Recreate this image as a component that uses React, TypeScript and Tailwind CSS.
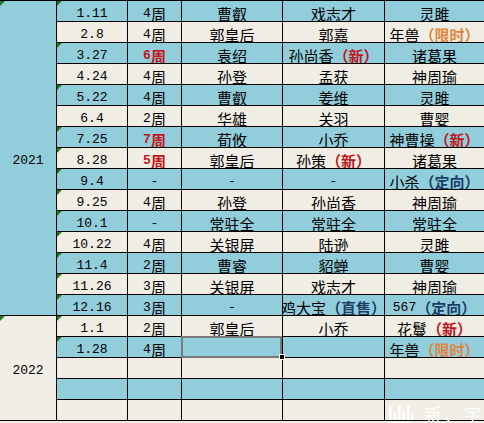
import React from "react";

type Seg = { t: string; c?: "red" | "orange" | "navy" };
type Row = {
  date: string;
  weeks: Seg[];
  a: Seg[];
  b: Seg[];
  c: Seg[];
  tri?: boolean;
};

const s = (t: string, c?: Seg["c"]): Seg[] => (t ? [{ t, c }] : []);

const rows2021: Row[] = [
  { date: "1.11", weeks: s("4周"), a: s("曹叡"), b: s("戏志才"), c: s("灵雎"), tri: true },
  { date: "2.8", weeks: s("4周"), a: s("郭皇后"), b: s("郭嘉"), c: [{ t: "年兽" }, { t: "（限时）", c: "orange" }] },
  { date: "3.27", weeks: s("6周", "red"), a: s("袁绍"), b: [{ t: "孙尚香" }, { t: "（新）", c: "red" }], c: s("诸葛果"), tri: true },
  { date: "4.24", weeks: s("4周"), a: s("孙登"), b: s("孟获"), c: s("神周瑜") },
  { date: "5.22", weeks: s("4周"), a: s("曹叡"), b: s("姜维"), c: s("灵雎"), tri: true },
  { date: "6.4", weeks: s("2周"), a: s("华雄"), b: s("关羽"), c: s("曹婴") },
  { date: "7.25", weeks: s("7周", "red"), a: s("荀攸"), b: s("小乔"), c: [{ t: "神曹操" }, { t: "（新）", c: "red" }], tri: true },
  { date: "8.28", weeks: s("5周", "red"), a: s("郭皇后"), b: [{ t: "孙策" }, { t: "（新）", c: "red" }], c: s("诸葛果"), tri: true },
  { date: "9.4", weeks: s("-"), a: s("-"), b: s("-"), c: [{ t: "小杀" }, { t: "（定向）", c: "navy" }], tri: true },
  { date: "9.25", weeks: s("4周"), a: s("孙登"), b: s("孙尚香"), c: s("神周瑜"), tri: true },
  { date: "10.1", weeks: s("-"), a: s("常驻全"), b: s("常驻全"), c: s("常驻全"), tri: true },
  { date: "10.22", weeks: s("4周"), a: s("关银屏"), b: s("陆逊"), c: s("灵雎"), tri: true },
  { date: "11.4", weeks: s("2周"), a: s("曹睿"), b: s("貂蝉"), c: s("曹婴"), tri: true },
  { date: "11.26", weeks: s("3周"), a: s("关银屏"), b: s("戏志才"), c: s("神周瑜"), tri: true },
  { date: "12.16", weeks: s("3周"), a: s("-"), b: [{ t: "鸡大宝" }, { t: "（直售）", c: "navy" }], c: [{ t: "567" }, { t: "（定向）", c: "navy" }], tri: true },
];

const rows2022: Row[] = [
  { date: "1.1", weeks: s("2周"), a: s("郭皇后"), b: s("小乔"), c: [{ t: "花鬘" }, { t: "（新）", c: "red" }], tri: true },
  { date: "1.28", weeks: s("4周"), a: [], b: [], c: [{ t: "年兽" }, { t: "（限时）", c: "orange" }], tri: true },
  { date: "", weeks: [], a: [], b: [], c: [] },
  { date: "", weeks: [], a: [], b: [], c: [] },
  { date: "", weeks: [], a: [], b: [], c: [] },
];

const colorClass = {
  red: "text-[#c0161b] font-bold",
  orange: "text-[#e0843a] font-bold",
  navy: "text-[#1b3f66] font-bold",
};

// ascii runs in a narrow mono face, the rest in CJK
const Text: React.FC<{ segs: Seg[] }> = ({ segs }) => (
  <>
    {segs.map((seg, i) =>
      seg.t.split(/([\x00-\x7f]+)/).filter(Boolean).map((part, j) => (
        <span
          key={`${i}-${j}`}
          className={`${seg.c ? colorClass[seg.c] : ""} ${
            /^[\x00-\x7f]+$/.test(part)
              ? "font-['Liberation_Mono',monospace] text-[13px]"
              : "font-['Noto_Sans_CJK_SC','Noto_Sans',sans-serif] text-[15px]"
          }`}
        >
          {part}
        </span>
      ))
    )}
  </>
);

const Triangle = () => (
  <div className="absolute top-0 left-0 w-0 h-0 border-t-[5px] border-r-[5px] border-t-[#1f7a1f] border-r-transparent" />
);

const cell =
  "relative flex items-center justify-center pt-[4px] overflow-hidden whitespace-nowrap leading-none text-black border-b border-black";

const App: React.FC = () => {
  const all = [...rows2021, ...rows2022];

  return (
    <div className="relative w-[484px] h-[423px] overflow-hidden bg-[#efede4]">
      <div className="grid grid-cols-[57px_71px_54px_101px_102px_99px] grid-rows-[repeat(20,21px)] border-t border-black">
        {/* 年份 */}
        <div className={`${cell} row-span-15 col-start-1 row-start-1 border-r bg-[#92cddc]`}>
          <Triangle />
          <Text segs={s("2021")} />
        </div>
        <div className={`${cell} row-span-5 col-start-1 row-start-16 border-r bg-[#efede4]`}>
          <Triangle />
          <Text segs={s("2022")} />
        </div>

        {all.map((row, i) => {
          const bg = i % 2 === 0 ? "bg-[#92cddc]" : "bg-[#efede4]";
          const selected = i === 16;
          return (
            <React.Fragment key={i}>
              <div className={`${cell} ${bg} col-start-2 border-r`}>
                {row.tri && <Triangle />}
                <Text segs={s(row.date)} />
              </div>
              <div className={`${cell} ${bg} border-r`}>
                <Text segs={row.weeks} />
              </div>
              <div className={`${cell} ${bg} border-r ${selected ? "overflow-visible z-10" : ""}`}>
                <Text segs={row.a} />
                {selected && (
                  <>
                    <div className="absolute -top-[1px] -left-[1px] right-0 -bottom-[1px] border-2 border-[#7a7a7a]" />
                    <div className="absolute -right-[3px] -bottom-[3px] w-[6px] h-[6px] bg-black border border-white" />
                  </>
                )}
              </div>
              <div className={`${cell} ${bg} border-r`}>
                <Text segs={row.b} />
              </div>
              <div className={`${cell} ${bg}`}>
                <Text segs={row.c} />
              </div>
            </React.Fragment>
          );
        })}
      </div>

      {/* 水印 */}
      <div className="absolute right-0 bottom-0 flex items-end gap-[10px] text-white">
        <svg width="26" height="20" viewBox="0 0 26 20">
          <g fill="#ffffff">
            <rect x="1" y="4" width="2.5" height="13" />
            <rect x="5.5" y="10" width="2.5" height="7" />
            <rect x="10" y="2" width="2.5" height="15" />
            <rect x="14.5" y="8" width="2.5" height="9" />
            <rect x="19" y="3" width="2.5" height="14" />
            <rect x="23" y="10" width="2.5" height="7" />
            <rect x="2" y="18" width="20" height="1.5" opacity="0.7" />
          </g>
        </svg>
        <span className="font-['Noto_Sans_CJK_SC',sans-serif] text-[17px] leading-none pb-[1px] tracking-[3px] whitespace-nowrap">
          新、宇
        </span>
      </div>
    </div>
  );
};

export default App;
